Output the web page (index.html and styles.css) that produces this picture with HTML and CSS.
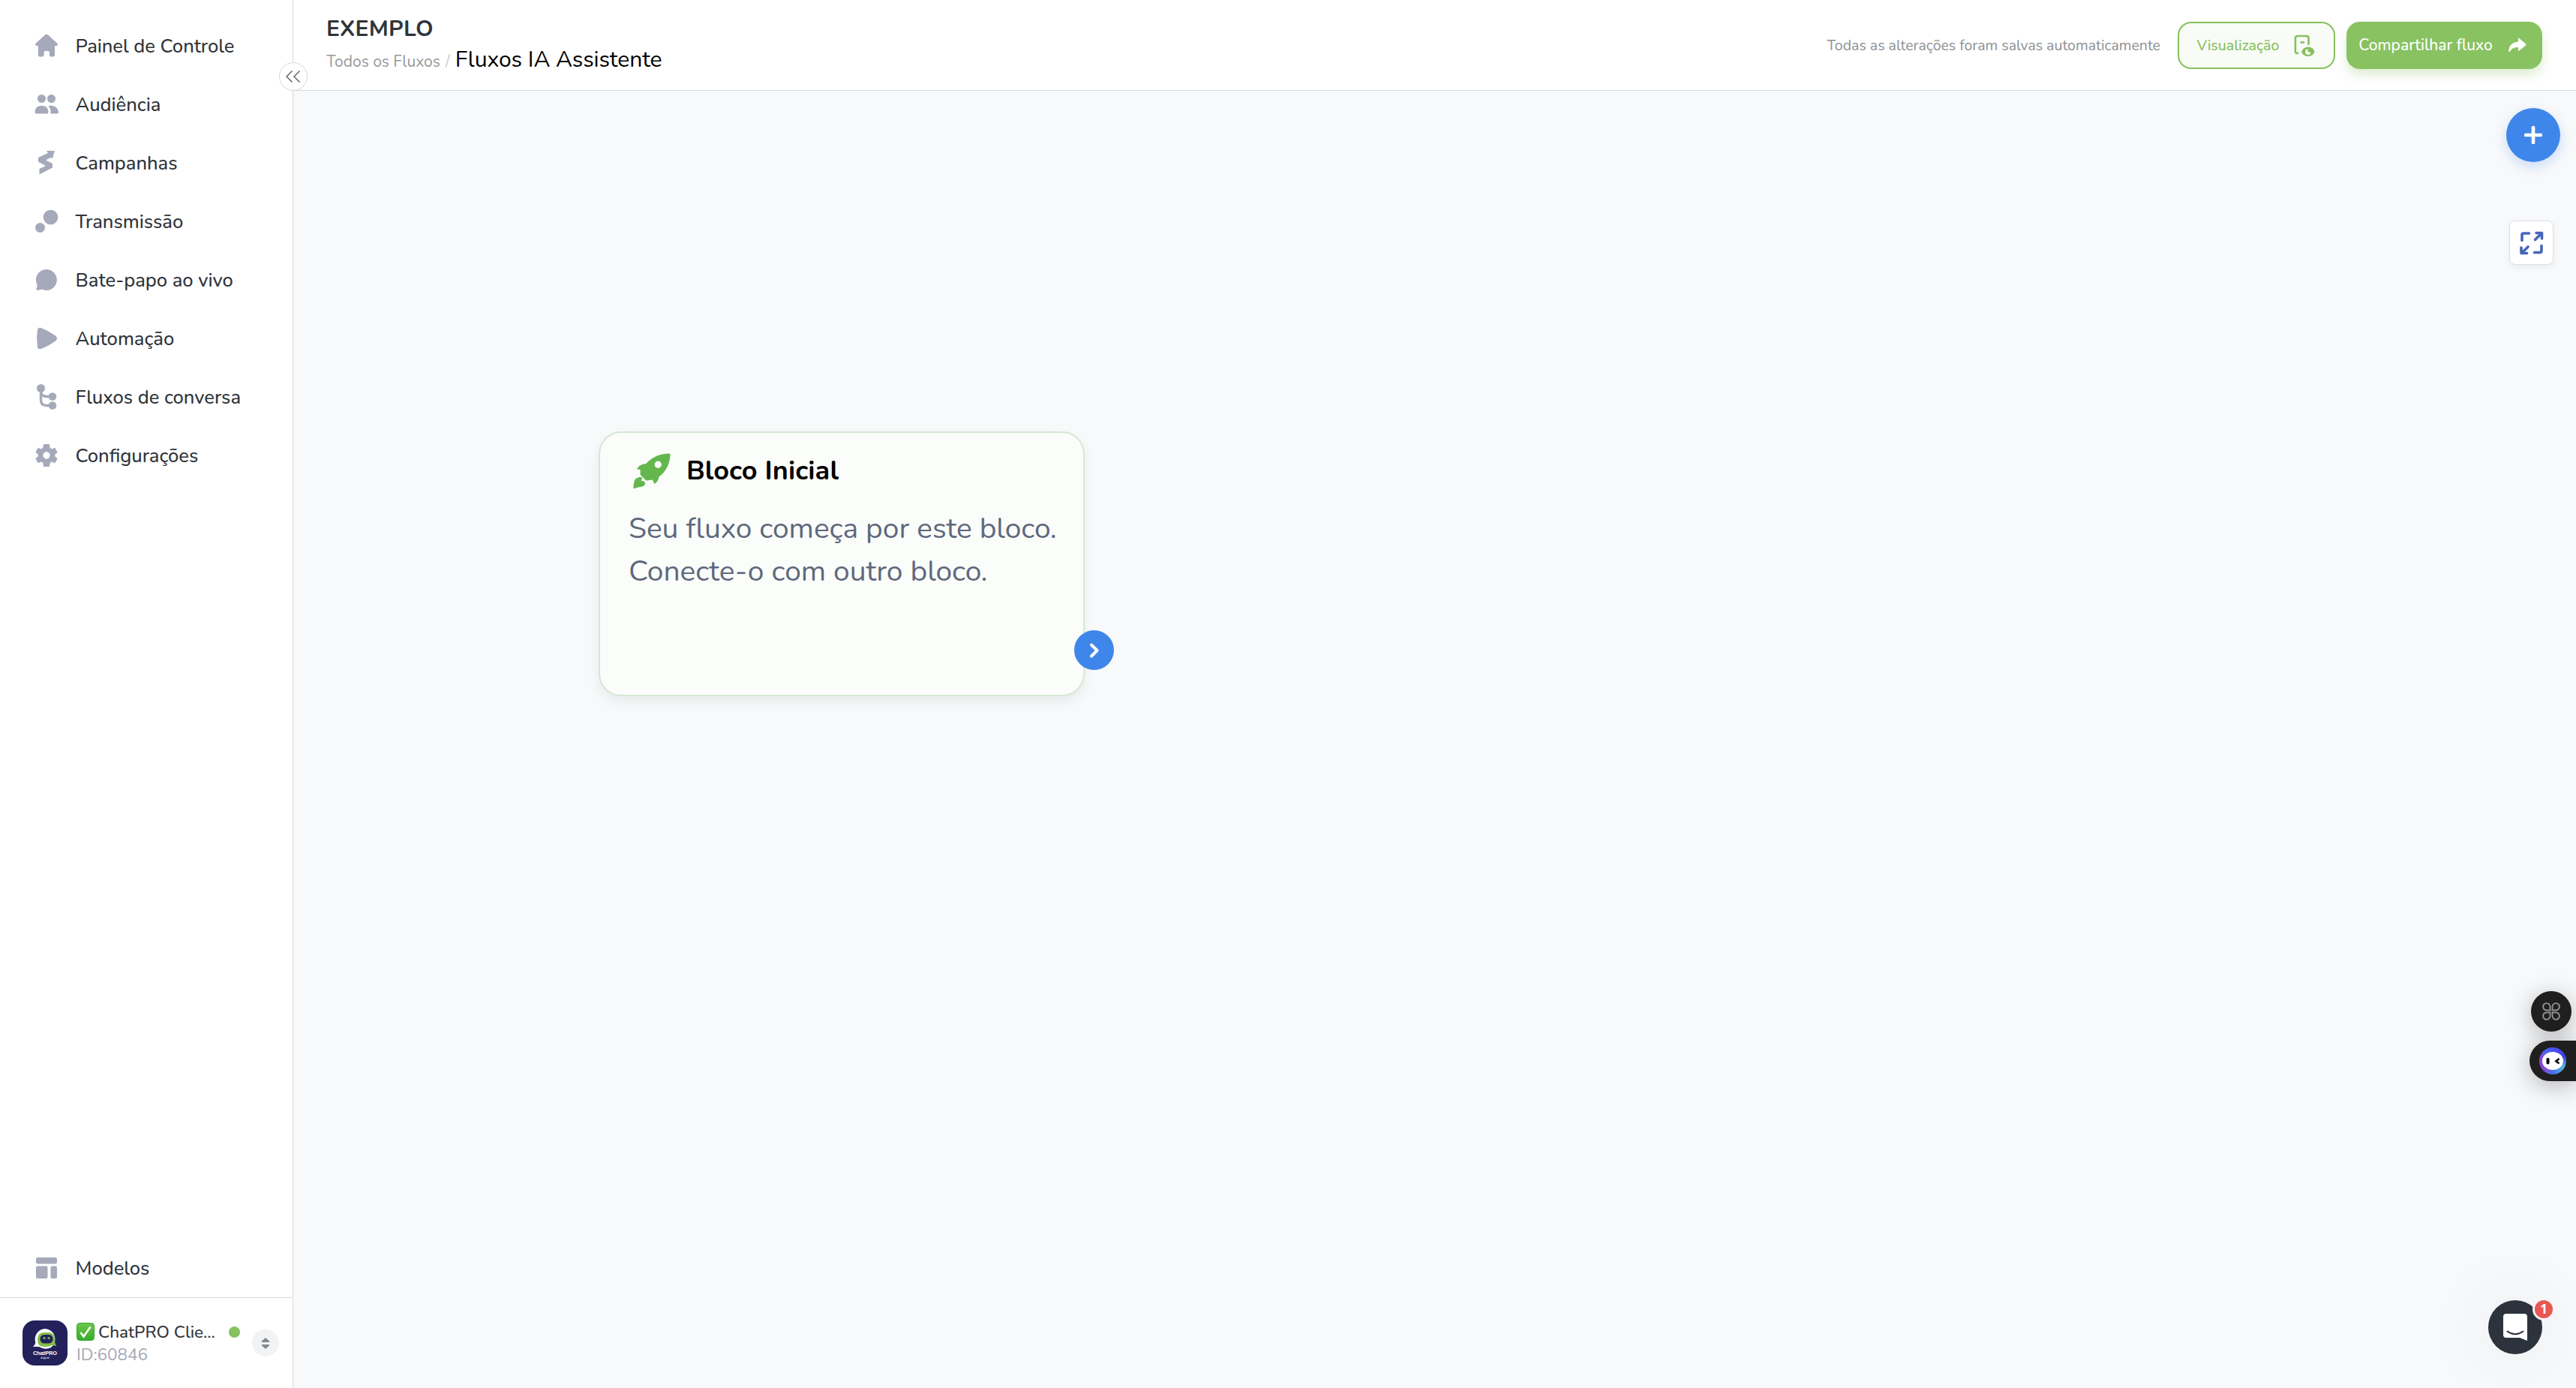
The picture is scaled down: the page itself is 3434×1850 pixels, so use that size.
FILE: index.html
```html
<!DOCTYPE html>
<html lang="pt-BR">
<head>
    <meta charset="UTF-8">
    <meta name="viewport" content="width=device-width, initial-scale=1.0">
    <title>Fluxos IA Assistente</title>
    <link rel="stylesheet" href="styles.css">
</head>
<body>

<div class="app">
    <div class="sidebar">
        <div class="menu">
            <a href="#" class="menu-item">
                <svg class="icon" viewBox="0 0 36 36"><path d="M16 3.6Q18 1.8 20 3.6L32.5 15Q34 17.5 31 18H29V30Q29 32.6 26.5 32.6H24Q22 32.6 22 30.5V27Q22 25 20 25H16.5Q14.5 25 14.5 27V30.5Q14.5 32.6 12.5 32.6H9.5Q7 32.6 7 30V18H5Q2 17.5 3.500 15Z"/></svg>
                <span>Painel de Controle</span>
            </a>
            <a href="#" class="menu-item">
                <svg class="icon" viewBox="0 0 36 36"><circle cx="11.500" cy="10.500" r="5.500"/><circle cx="24.500" cy="10.500" r="5.500"/><path d="M2.500 28.500C3 22 6.500 20 11.500 20S20 22 20.500 28.500Q20.500 30.500 18.500 30.500H4.500Q2.500 30.500 2.500 28.500ZM20.500 20C28 19 33 22 34 28.500Q34 30.500 32 30.500H23.500C24 26 23 23 20.500 20Z"/></svg>
                <span>Audiência</span>
            </a>
            <a href="#" class="menu-item">
                <svg class="icon" viewBox="0 0 36 36"><path d="M18 2H29L26 12L23.500 11L17 14.500L25 18.500Q26 19 26 21V24.500L8.500 33.500V26L17 22L7.500 17Q7 16.500 7 15V11L20 5Z"/></svg>
                <span>Campanhas</span>
            </a>
            <a href="#" class="menu-item">
                <svg class="icon" viewBox="0 0 36 36"><circle cx="23.500" cy="12.500" r="9.800"/><circle cx="9.500" cy="26.500" r="6.500"/></svg>
                <span>Transmissão</span>
            </a>
            <a href="#" class="menu-item">
                <svg class="icon" viewBox="0 0 36 36"><path d="M18 4A14 14 0 1 1 11.500 30.500Q8 32 5.500 31.800Q3.800 31.500 4.500 29.500Q5.800 27 5.500 24.500A14 14 0 0 1 18 4Z"/></svg>
                <span>Bate-papo ao vivo</span>
            </a>
            <a href="#" class="menu-item">
                <svg class="icon" viewBox="0 0 36 36"><path d="M6 6Q7 3.200 10.500 4Q20 7.500 30 14.500Q34 18 30 21.500Q20 28.500 10.500 32Q7 32.800 6 30Q4.200 18 6 6Z"/></svg>
                <span>Automação</span>
            </a>
            <a href="#" class="menu-item">
                <svg class="icon" viewBox="0 0 36 36"><circle cx="10.500" cy="6.500" r="5.500"/><circle cx="26" cy="17.500" r="5.300"/><circle cx="26" cy="29.500" r="5.300"/><path class="line" d="M10.500 8V22Q10.500 29.500 18 29.500H25M10.500 11Q11 17.500 18 17.500H25"/></svg>
                <span>Fluxos de conversa</span>
            </a>
            <a href="#" class="menu-item">
                <svg class="icon" viewBox="0 0 24 24"><path d="M19.500 12.900c.05-.3.060-.6.060-.9s0-.6-.060-.9l2-1.600c.2-.15.230-.4.100-.65l-1.900-3.300c-.1-.2-.4-.3-.6-.2l-2.400 1c-.5-.4-1-.7-1.600-.9L14.700 2.500c0-.3-.2-.5-.5-.5h-4.400c-.3 0-.5.200-.5.500l-.4 2.900c-.6.200-1.100.5-1.600.9l-2.400-1c-.2-.1-.5 0-.6.200L2.400 8.850c-.1.200-.1.500.1.650l2 1.600c-.1.600-.1 1.200 0 1.800l-2 1.600c-.2.150-.2.400-.1.650l1.900 3.300c.1.200.4.300.6.200l2.400-1c.5.400 1 .7 1.600.9l.4 2.950c0 .3.200.5.500.5h4.400c.3 0 .5-.2.500-.5l.4-2.950c.6-.2 1.100-.5 1.600-.9l2.400 1c.2.100.5 0 .6-.2l1.900-3.300c.1-.2.100-.5-.1-.65zM12 15.100a3.100 3.100 0 1 1 0-6.200 3.100 3.100 0 0 1 0 6.200z"/></svg>
                <span>Configurações</span>
            </a>
        </div>

        <a href="#" class="menu-item">
            <svg class="icon" viewBox="0 0 36 36"><rect x="4" y="4" width="28" height="8.500" rx="2"/><rect x="4" y="15.500" width="15.500" height="16.500" rx="2"/><rect x="23.500" y="15.500" width="8.500" height="16.500" rx="2"/></svg>
            <span>Modelos</span>
        </a>

        <div class="account">
            <div class="avatar">
                <svg viewBox="0 0 60 60">
                    <path d="M30 11A14 14 0 0 1 38 36Q30 40 22 35L14 35Q18 32 17 28A14 14 0 0 1 30 11Z" fill="#fff"/>
                    <path d="M29 16H34Q43 16 43 26Q43 31 45 34L39 33Q36 35 29 35Q20 35 20 26Q20 16 29 16Z" fill="#84bd4b"/>
                    <rect x="23.500" y="19" width="17" height="11.500" rx="5.500" fill="#22215c"/>
                    <circle cx="29" cy="23.500" r="1.600" fill="#84bd4b"/><circle cx="35" cy="23.500" r="1.600" fill="#84bd4b"/>
                    <text x="30" y="45.500" text-anchor="middle" class="logo-name" textLength="32" lengthAdjust="spacingAndGlyphs">ChatPRO</text>
                    <text x="30" y="51" text-anchor="middle" class="logo-sub">digital</text>
                </svg>
            </div>
            <div class="account-info">
                <div class="account-name">
                    <svg class="check" viewBox="0 0 24 24"><defs><linearGradient id="check-bg" x1="0" y1="0" x2="0" y2="1"><stop offset="0" stop-color="#6cc84a"/><stop offset="1" stop-color="#35ab29"/></linearGradient></defs><rect x=".5" y=".5" width="23" height="23" rx="4" fill="url(#check-bg)" stroke="#36a52a"/><path d="M5.500 13L9.500 18.500L18.500 5.500" fill="none" stroke="#fff" stroke-width="2.600"/></svg>
                    <span>ChatPRO Clie...</span>
                </div>
                <div class="account-id">ID:60846</div>
            </div>
            <span class="status"></span>
            <button class="switch"><svg viewBox="0 0 12 15"><path d="M6 0L11 4.500Q12 6 10 6H2Q0 6 1 4.500ZM6 15L11 10.500Q12 9 10 9H2Q0 9 1 10.500Z" fill="#84898e"/></svg></button>
        </div>
        <button class="collapse"><svg viewBox="0 0 20 16"><path d="M8.500 .5L1 8L8.500 15.500M18.500 .5L11 8L18.500 15.500"/></svg></button>
    </div>

    <div class="main">
        <div class="header">
            <div class="titles">
                <h1>EXEMPLO</h1>
                <div class="breadcrumb">
                    <a href="#">Todos os Fluxos</a>
                    <span class="slash">/</span>
                    <span class="current">Fluxos IA Assistente</span>
                </div>
            </div>
            <div class="actions">
                <span class="saved">Todas as alterações foram salvas automaticamente</span>
                <button class="btn preview">
                    <span>Visualização</span>
                    <svg viewBox="0 0 30 30"><path d="M6 26H5Q2.900 26 2.900 23.500V6Q2.900 3 6 3H17.500Q20.500 3 20.500 6V14M10.500 11.500H14" fill="none" stroke="#86c15c" stroke-width="2.600" stroke-linecap="round"/><path d="M11 24Q13.500 17.500 20 17.500T28.500 24Q26 30 19.700 30T11 24Z" fill="#86c15c"/><path d="M19.500 20.500A3.700 3.700 0 1 0 23.500 24.500A3 3 0 0 1 19.500 20.500Z" fill="#fff"/></svg>
                </button>
                <button class="btn share">
                    <span>Compartilhar fluxo</span>
                    <svg viewBox="0 0 24 20"><path d="M13 1.200Q13 0 14.200 1L23 8.500Q24 9.500 23 10.500L14.200 17.500Q13 18.300 13 17V13Q5 12.500 1.500 19Q.3 19.500 .3 18Q1 6.500 13 5.500Z" fill="#fff"/></svg>
                </button>
            </div>
        </div>

        <div class="canvas">
            <button class="add"><svg viewBox="0 0 24 24"><path d="M12 2V22M2 12H22"/></svg></button>
            <button class="expand"><svg viewBox="0 0 32 32"><path d="M3 12.500V5Q3 3 5 3H12.500M29 19.500V26.500Q29 28.500 27 28.500H19.500M20.500 11.500L28 4M22 2.500H29.500V10M11 21L3.500 28.500M2 22V29.500H9.500"/></svg></button>

            <div class="node">
                <div class="node-title">
                    <svg viewBox="0 0 52 52"><path d="M50 .5Q52 1 51.500 3Q50 22 36 32.500Q35 39 29.500 43L27 37L18 38L10 30V23L5 22Q9 15 18 14.500Q30 1 50 .5ZM34.500 11A4.800 4.800 0 1 0 34.600 11ZM9 33L13 34L11 38L15 39L17 42Q15 47 8 47L2 49Q0 50 .5 46Q1 37 4 35Z" fill="#63b74d" fill-rule="evenodd"/></svg>
                    <span>Bloco Inicial</span>
                </div>
                <p>Seu fluxo começa por este bloco.<br>Conecte-o com outro bloco.</p>
                <button class="port"><svg viewBox="0 0 12 20"><path d="M2 2.500L9.500 10L2 17.500"/></svg></button>
            </div>

            <button class="tool"><svg viewBox="0 0 24 24"><path d="M10.500 10.500H6A4.700 4.700 0 1 1 10.500 6ZM13.500 10.500V6A4.700 4.700 0 1 1 18 10.500ZM10.500 13.500V18A4.700 4.700 0 1 1 6 13.500ZM13.500 13.500H18A4.700 4.700 0 1 1 13.500 18Z"/></svg></button>
            <button class="assistant">
                <span class="face"><svg viewBox="0 0 28 24"><ellipse cx="14" cy="12" rx="14" ry="12" fill="#fff"/><rect x="5.500" y="8" width="4" height="8.500" rx="1.800"/><path d="M22.500 9L18.500 12.500L22.500 15.500" fill="none" stroke="#111" stroke-width="2.800"/></svg></span>
            </button>
            <button class="chat">
                <svg viewBox="0 0 32 36"><path d="M4 0H28Q32 0 32 4V36L22 32H4Q0 32 0 28V4Q0 0 4 0Z" fill="#fff"/><path d="M5.500 23.500Q16 31 26.500 23.500" fill="none" stroke="#2d333c" stroke-width="2" stroke-linecap="round"/></svg>
                <span class="badge">1</span>
            </button>
        </div>
    </div>
</div>

</body>
</html>
```
FILE: styles.css
```css
body {
    margin: 0;
    font-family: Nunito, Lato, "Open Sans", sans-serif;
    color: #30353b;
    background-color: #f8f9fb;
}
a {
    color: inherit;
    text-decoration: none;
}
button {
    font-family: inherit;
    border: none;
    padding: 0;
    display: flex;
    align-items: center;
    justify-content: center;
    box-sizing: border-box;
}
span {
    white-space: nowrap;
}
.app {
    display: flex;
    height: 1850px;
    overflow: hidden;
}

/* menu lateral */
.sidebar {
    position: relative;
    z-index: 2;
    width: 391px;
    flex: none;
    box-sizing: border-box;
    display: flex;
    flex-direction: column;
    background-color: #fff;
    border-right: 1px solid #d9dcdf;
}
.menu {
    flex: 1;
    padding-top: 22px;
}
.menu-item {
    display: flex;
    align-items: center;
    height: 78px;
    padding-left: 44px;
    gap: 20.5px;
    font-size: 25.5px;
    font-weight: 500;
}
.icon {
    width: 36px;
    height: 36px;
    fill: #a5a9b9;
}
.icon .line {
    fill: none;
    stroke: #a5a9b9;
    stroke-width: 3.4;
}
.account {
    display: flex;
    align-items: center;
    height: 120px;
    padding-left: 30px;
    border-top: 1px solid #d9dcdf;
}
.avatar {
    width: 60px;
    height: 60px;
    border-radius: 16px;
    background-color: #22215c;
}
.logo-name {
    font: bold 8px "Liberation Sans", sans-serif;
    fill: #fff;
}
.logo-sub {
    font: bold 4px "Liberation Sans", sans-serif;
    fill: #c9c9dd;
}
.account-info {
    width: 191px;
    margin-left: 12px;
    font-size: 22.5px;
}
.account-name {
    display: flex;
    align-items: center;
    gap: 5px;
    height: 30px;
    font-weight: 500;
}
.check {
    width: 24px;
    height: 24px;
}
.account-id {
    height: 30px;
    line-height: 31px;
    color: #a5a9b5;
}
.status {
    width: 15px;
    height: 15px;
    margin: -30px 16px 0 12px;
    border-radius: 50%;
    background-color: #86c15f;
}
.switch {
    width: 36px;
    height: 36px;
    border-radius: 50%;
    background-color: #f2f3f4;
}
.switch svg {
    width: 12px;
    height: 15px;
}
.collapse {
    position: absolute;
    top: 83px;
    right: -20px;
    width: 38px;
    height: 38px;
    border: 1px solid #d5d8da;
    border-radius: 50%;
    background-color: #fff;
}
.collapse svg {
    width: 20px;
    height: 16px;
    fill: none;
    stroke: #5b5e62;
    stroke-width: 1.4;
}

/* topo */
.main {
    flex: 1;
    display: flex;
    flex-direction: column;
}
.header {
    display: flex;
    justify-content: space-between;
    height: 121px;
    box-sizing: border-box;
    padding: 0 45px 0 44px;
    background-color: #fff;
    border-bottom: 1px solid #d9dcdf;
}
.titles h1 {
    margin: 20px 0 0;
    font-size: 30px;
    line-height: 38px;
    font-weight: 700;
    letter-spacing: 0.3px;
}
.breadcrumb {
    display: flex;
    align-items: baseline;
    gap: 7px;
    height: 44px;
    line-height: 44px;
    font-size: 21px;
    color: #96999c;
}
.slash {
    color: #ccc;
}
.current {
    font-size: 30px;
    color: #000;
}
.actions {
    display: flex;
    align-items: center;
}
.saved {
    font-size: 19.5px;
    color: #8e9194;
}
.btn {
    height: 63px;
    border-radius: 18px;
    font-weight: 500;
}
.preview {
    width: 210px;
    margin: 0 15px 0 23px;
    gap: 19px;
    border: 2px solid #86c15c;
    background-color: #f9fbf7;
    color: #86c15c;
    font-size: 19.5px;
}
.preview svg {
    width: 30px;
    height: 30px;
}
.share {
    width: 261px;
    gap: 21px;
    padding-right: 5px;
    background-color: #88c261;
    color: #fff;
    font-size: 21px;
    box-shadow: 0 8px 14px rgba(136, 194, 97, 0.28);
}
.share svg {
    width: 24px;
    height: 20px;
}

/* area do fluxo */
.canvas {
    position: relative;
    flex: 1;
}
.add {
    position: absolute;
    top: 23px;
    right: 21px;
    width: 72px;
    height: 72px;
    border-radius: 50%;
    background-color: #3f86ea;
    box-shadow: 0 6px 16px rgba(63, 134, 234, 0.25);
}
.add svg {
    width: 24px;
    height: 24px;
    stroke: #fff;
    stroke-width: 4.6;
    stroke-linecap: round;
}
.expand {
    position: absolute;
    top: 173px;
    right: 30px;
    width: 59px;
    height: 59px;
    border: 1px solid #dcdfe3;
    border-radius: 8px;
    background-color: #fff;
    box-shadow: 0 3px 8px rgba(0, 0, 0, 0.06);
}
.expand svg {
    width: 32px;
    height: 32px;
    fill: none;
    stroke: #4765b9;
    stroke-width: 3.6;
    stroke-linecap: round;
    stroke-linejoin: round;
}
.node {
    position: absolute;
    left: 407px;
    top: 454px;
    width: 648px;
    height: 353px;
    box-sizing: border-box;
    padding: 28px 0 0 38px;
    border: 2px solid #d5e9d3;
    border-radius: 30px;
    background-color: #fbfdfa;
    box-shadow: 0 8px 16px rgba(0, 0, 0, 0.06);
}
.node-title {
    display: flex;
    align-items: center;
    gap: 21px;
    height: 48px;
    font-size: 36px;
    font-weight: 700;
    letter-spacing: 0.1px;
    color: #000;
}
.node-title svg {
    width: 50px;
    height: 52px;
    margin-left: 6px;
}
.node-title span {
    padding-bottom: 4px;
}
.node p {
    margin: 23px 0 0;
    font-size: 38.9px;
    line-height: 57px;
    color: #5e687d;
}
.port {
    position: absolute;
    right: -41px;
    bottom: 33px;
    width: 53px;
    height: 53px;
    border-radius: 50%;
    background-color: #3f86ea;
}
.port svg {
    width: 12px;
    height: 20px;
    fill: none;
    stroke: #fff;
    stroke-width: 4;
    stroke-linecap: round;
    stroke-linejoin: round;
}

/* botoes flutuantes */
.tool {
    position: absolute;
    top: 1200px;
    right: 6px;
    width: 54px;
    height: 54px;
    border-radius: 50%;
    background-color: #1f1f1f;
    box-shadow: 0 6px 32px rgba(0, 0, 0, 0.28);
}
.tool svg {
    width: 24px;
    height: 24px;
    fill: none;
    stroke: #929292;
    stroke-width: 1.9;
}
.assistant {
    position: absolute;
    top: 1266px;
    right: 0;
    width: 62px;
    height: 54px;
    border-radius: 27px 0 0 27px;
    background-color: #1f1f1f;
    box-shadow: 0 6px 32px rgba(0, 0, 0, 0.28);
}
.face {
    display: flex;
    align-items: center;
    justify-content: center;
    width: 36px;
    height: 36px;
    border-radius: 50%;
    background: conic-gradient(#4a4ff0, #3b45ee 70deg, #55b7d6 120deg, #4676ee 175deg, #8a48d8 230deg, #8747d5 280deg, #4668ef 330deg, #4a4ff0);
}
.face svg {
    width: 28px;
    height: 24px;
}
.chat {
    position: absolute;
    top: 1612px;
    right: 45px;
    width: 72px;
    height: 72px;
    border-radius: 50%;
    background-color: #2d333c;
    box-shadow: 0 2px 100px rgba(0, 0, 0, 0.09);
}
.chat svg {
    width: 32px;
    height: 36px;
}
.badge {
    position: absolute;
    top: -3px;
    right: -17px;
    width: 24px;
    height: 24px;
    border: 3px solid #f3f4f6;
    border-radius: 50%;
    background-color: #e85752;
    color: #fff;
    font: bold 17px/24px "Open Sans", sans-serif;
    text-align: center;
}
```
